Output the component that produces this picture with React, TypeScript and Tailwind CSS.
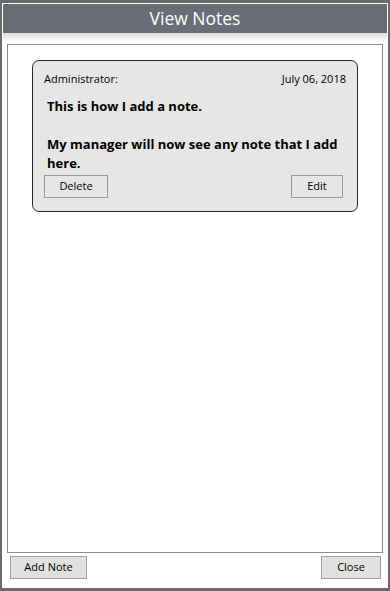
import React from "react";

const font = { fontFamily: '"Open Sans", "Noto Sans", sans-serif' };

export default function App() {
  return (
    <div className="w-[390px] h-[591px] bg-[#6b6b6b] pt-[3px] px-[2px] overflow-hidden" style={font}>
      <div className="h-[585px] bg-white p-[1px] flex flex-col">
        <div className="h-[29px] bg-[#696d75] text-white text-[17.5px] leading-[29px] text-center">View Notes</div>
        <div className="h-[9px] bg-gradient-to-b from-[#dcdcdc] to-white" />
        <div className="h-[2px]" />
        <div className="mx-[4px] h-[509px] border border-[#8c8c8c] pt-[15px] px-[24px]">
          <div className="h-[152px] bg-[#e6e6e6] border border-[#2a2a2a] rounded-[7px] pt-[10px] px-[11px] flex flex-col">
            <div className="flex justify-between text-[11px] leading-[16px] text-black">
              <span>Administrator:</span>
              <span>July 06, 2018</span>
            </div>
            <div className="mt-[10px] pl-[3px] text-[13px] font-bold leading-[19px] text-black">
              <div>This is how I add a note.</div>
              <div className="h-[19px]" />
              <div>My manager will now see any note that I add here.</div>
            </div>
            <div className="mt-[2px] flex justify-between">
              <button className="w-[64px] h-[23px] border border-[#9a9a9a] bg-[#e6e6e6] text-[11px] text-black">Delete</button>
              <button className="w-[52px] h-[23px] mr-[3px] border border-[#9a9a9a] bg-[#e6e6e6] text-[11px] text-black">Edit</button>
            </div>
          </div>
        </div>
        <div className="flex justify-between pl-[7px] pr-[6px] pt-[3px]">
          <button className="w-[77px] h-[23px] border border-[#a0a0a0] bg-[#e1e1e1] text-[11px] text-black">Add Note</button>
          <button className="w-[60px] h-[23px] border border-[#a0a0a0] bg-[#e1e1e1] text-[11px] text-black">Close</button>
        </div>
      </div>
    </div>
  );
}
